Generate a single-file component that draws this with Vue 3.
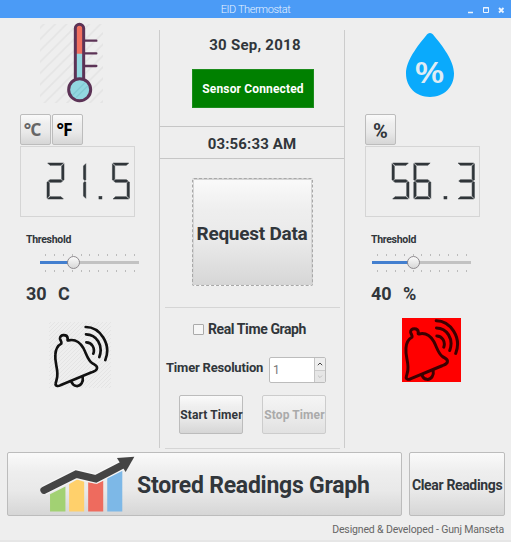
<script setup>
import { ref } from 'vue'

const SEGMENTS = {
  a: '2,0 49,0 42,7 9,7',
  b: '51,2 51,51 47,52 44,48 44,9',
  c: '51,57 51,106 44,99 44,60 47,56',
  d: '9,101 42,101 49,108 2,108',
  e: '0,57 4,56 7,60 7,99 0,106',
  f: '0,2 7,9 7,48 4,52 0,51',
  g: '4,54 9,50 42,50 47,54 42,58 9,58'
}
const DIGITS = {
  1: 'bc', 2: 'abged', 3: 'abgcd', 5: 'afgcd', 6: 'afgecd'
}

const checked = ref(false)
const panels = [
  {
    id: 'temperature', kind: 'thermometer', units: ['°C', '°F'], reading: '21.5',
    fill: 33, value: '30', unit: 'C'
  },
  {
    id: 'humidity', kind: 'drop', units: ['%'], reading: '56.3',
    fill: 41.5, value: '40', unit: '%'
  }
]
const segmentsOf = (ch) => (DIGITS[ch] || '').split('').map((s) => SEGMENTS[s])
</script>

<template>
  <div class="window">
    <header class="titlebar">
      <span class="title">EID Thermostat</span>
      <svg class="controls" viewBox="0 0 40 18">
        <path d="M1 11.500h5" stroke-width="1.500" />
        <path d="M16.500 6.500h5v5h-5z M16 7h6" stroke-width="1" />
        <path d="M32 7l4.500 4.500M36.500 7l-4.500 4.500" stroke-width="1.800" />
      </svg>
    </header>

    <main class="board">
      <section v-for="p in panels" :key="p.id" class="panel" :class="p.id">
        <div class="picture">
          <svg v-if="p.kind === 'thermometer'" class="thermo" viewBox="120 72 189 237">
            <defs>
              <pattern id="wide" width="34" height="34" patternUnits="userSpaceOnUse">
                <path d="M-4 38L38 -4M-21 21L21 -21M13 55L55 13" stroke="#e4e4e4" stroke-width="5" />
              </pattern>
            </defs>
            <rect x="120" y="72" width="189" height="237" fill="url(#wide)" />
            <path d="M255 122h34M255 160h34M255 198h34" stroke="#5c3356" stroke-width="7" stroke-linecap="round" />
            <rect x="226" y="73" width="25" height="182" rx="12.500" fill="#92d8e0" />
            <path d="M226 161V86a12.500 12.500 0 0 1 25 0v75z" fill="#f1705f" />
            <rect x="226" y="73" width="25" height="182" rx="12.500" fill="none" stroke="#5c3356" stroke-width="9" />
            <circle cx="239" cy="269" r="33" fill="#92d8e0" stroke="#5c3356" stroke-width="9" />
            <path d="M218 285l36-36M229 292l34-34" stroke="#83cbd3" stroke-width="4" />
          </svg>
          <div v-else class="drop">
            <svg viewBox="0 0 144 192">
              <path d="M72 0C67 0 64 3 60 8C35 38 0 83 0 121C0 164 31 192 72 192S144 164 144 121C144 83 109 38 84 8C80 3 77 0 72 0Z" fill="#0aaafc" />
            </svg>
            <span>%</span>
          </div>
        </div>

        <div class="units">
          <button v-for="(u, i) in p.units" :key="u" class="btn unit" :class="{ muted: p.units.length > 1 && i === 0, dark: i === 1 }">{{ u }}</button>
        </div>

        <div class="lcd" role="img" :aria-label="p.reading">
          <svg viewBox="0 0 248 108">
            <g v-for="(ch, i) in p.reading" :key="i" :transform="`translate(${i * 65.4} 0)`">
              <polygon v-for="pts in segmentsOf(ch)" :key="pts" :points="pts" />
              <rect v-if="ch === '.'" x="25" y="100" width="9" height="8" />
            </g>
          </svg>
        </div>

        <div class="threshold">Threshold</div>
        <div class="slider">
          <div class="ticks"><i v-for="n in 11" :key="n"></i></div>
          <div class="track">
            <div class="fill" :style="{ width: p.fill + '%' }"></div>
            <div class="knob"></div>
          </div>
          <div class="ticks"><i v-for="n in 11" :key="n"></i></div>
        </div>
        <div class="value"><span>{{ p.value }}</span><span>{{ p.unit }}</span></div>

        <svg class="bell" :viewBox="p.kind === 'drop' ? '155 58 176 193' : '147 51 186 198'">
          <defs>
            <pattern id="fine" width="12" height="12" patternUnits="userSpaceOnUse">
              <path d="M-3 15L15 -3M-9 9L9 -9M3 21L21 3" stroke="#e4e4e4" stroke-width="3" />
            </pattern>
          </defs>
          <rect v-if="p.kind !== 'drop'" x="147" y="51" width="186" height="198" fill="url(#fine)" />
          <g class="bell-lines">
            <path d="M184 116C186 110 181 106 180 101C179 87 202 87 203 100C203 105 201 107 206 106C224 102 240 112 250 129C260 148 263 165 276 174C284 180 293 181 291 190C290 198 281 199 275 202L181 241C173 245 165 243 167 235C169 226 173 219 172 205C172 186 164 171 166 149C167 132 173 122 184 116Z" />
            <path d="M214 230C221 246 237 247 245 235C249 229 249 222 248 217" />
            <path d="M257 66C300 66 335 117 316 165M258 88C289 88 311 121 298 156M259 112C275 112 286 129 280 146" />
          </g>
        </svg>
      </section>

      <section class="middle">
        <div class="date">30 Sep, 2018</div>
        <div class="sensor">Sensor Connected</div>
        <div class="clock">03:56:33 AM</div>
        <button class="btn request"><span>Request Data</span></button>
        <div class="timer">
          <label class="realtime"><input v-model="checked" type="checkbox" />Real Time Graph</label>
          <div class="resolution">
            <span>Timer Resolution</span>
            <div class="spin">
              <span class="num">1</span>
              <div class="arrows">
                <svg viewBox="0 0 10 12"><path d="M2.800 7.200L5 5l2.200 2.200" stroke="#444" /></svg>
                <svg class="down" viewBox="0 0 10 12"><path d="M2.800 5L5 7.200L7.200 5" stroke="#bbb" /></svg>
              </div>
            </div>
          </div>
          <div class="actions">
            <button class="btn">Start Timer</button>
            <button class="btn" disabled>Stop Timer</button>
          </div>
        </div>
      </section>
    </main>

    <div class="bottom">
      <button class="btn stored">
        <svg viewBox="120 46 284 170">
          <path d="M150 160l46-23v75h-46z" fill="#a2d173" />
          <path d="M207 130l24-14 21 7v89h-45z" fill="#ffd06b" />
          <path d="M264 124l26 5 19-9v92h-45z" fill="#ee6b5e" />
          <path d="M321 112l45-22v122h-45z" fill="#7db8e7" />
          <path d="M132 148L228 100L287 114L374 69" fill="none" stroke="#fff" stroke-width="30" stroke-linejoin="round" opacity=".5" />
          <path d="M132 148L228 100L287 114L374 69" fill="none" stroke="#444" stroke-width="22" stroke-linecap="round" />
          <path d="M350 52L402 48L376 94Z" fill="#444" />
        </svg>
        <span>Stored Readings Graph</span>
      </button>
      <button class="btn clear">Clear Readings</button>
    </div>
    <footer>Designed &amp; Developed - Gunj Manseta</footer>
  </div>
</template>

<style>
body { background: #eee; overflow: hidden; }
</style>

<style scoped>
* { box-sizing: border-box; }
.window { width: 511px; height: 542px; background: #eee; font-family: Roboto, "Liberation Sans", sans-serif; color: #31363b; font-weight: 700; border-bottom: 2px solid #e6e6e6; white-space: nowrap; overflow: hidden; }
.titlebar { height: 18px; background: #4b9bf6; display: grid; grid-template-columns: 1fr auto 1fr; align-items: center; color: #e6f2ff; }
.title { grid-column: 2; font-size: 11px; font-weight: 300; line-height: 19px; letter-spacing: -0.4px; }
.controls { justify-self: end; width: 40px; height: 18px; margin-right: 4px; fill: none; stroke: #eaf4ff; }
.board { display: grid; grid-template-columns: 160px 184px 167px; height: 434px; }
.panel { grid-row: 1; padding: 6px 0 0 20px; }
.temperature { grid-column: 1; }
.humidity { grid-column: 3; padding-left: 21px; }
.picture { height: 90px; }
.thermo { display: block; width: 63px; height: 79px; margin-left: 20px; overflow: visible; }
.drop { display: grid; width: 48px; height: 73px; padding-top: 9px; margin-left: 41px; }
.drop svg { grid-area: 1 / 1; width: 48px; height: 64px; }
.drop span { grid-area: 1 / 1; place-self: center; padding-top: 13px; color: #dfecf5; font: 600 29px/1 "Open Sans", sans-serif; transform: scaleX(1.2); }
.btn { font-family: inherit; font-weight: 700; color: #31363b; border: 1px solid #bcbcbc; border-radius: 2px; background: linear-gradient(#fafafa, #eee 30%, #e9e9e9 60%, #d6d6d6); padding: 0; display: flex; align-items: center; justify-content: center; white-space: nowrap; }
.units { display: flex; gap: 1px; height: 32px; }
.unit { width: 31px; height: 31px; font: 700 17.500px/1 "Open Sans", sans-serif; padding: 0 7px 0 0; letter-spacing: -1px; }
.unit.muted { color: #666; }
.unit.dark { color: #000; }
.humidity .unit { font: 700 20px/1 Roboto, sans-serif; padding: 3px 0 0; letter-spacing: 0; }
.lcd { width: 115px; height: 71px; border: 1px solid #d5d5d5; padding: 16px 0 0 26px; }
.lcd svg { display: block; width: 82.700px; height: 36px; overflow: visible; fill: #30363a; stroke: #30363a; stroke-width: 1.500; }
.threshold { font-size: 10.500px; line-height: 15px; margin: 15px 0 -1px 6px; letter-spacing: -0.3px; }
.slider { width: 99px; margin: 8px 0 0 20px; }
.humidity .slider { margin-left: 7px; }
.ticks { display: flex; justify-content: space-between; padding: 0 4px 0 5px; height: 2px; }
.ticks i { width: 1px; background: #bbb; }
.track { height: 3px; margin: 5px 0 6px; background: #c2c2c2; display: flex; align-items: center; }
.fill { height: 3px; background: #437fcf; }
.knob { flex: none; width: 13px; height: 13px; margin-left: -6px; border: 1px solid #8f8b8f; border-radius: 50%; background: linear-gradient(#fafafa, #d8d8d8); }
.value { display: flex; margin: 11px 0 0 6px; font-size: 18px; line-height: 22px; }
.value span:first-child { width: 32px; }
.bell { display: block; width: 62px; height: 66px; margin: 17px 0 0 29px; }
.humidity .bell { width: 59px; height: 64px; margin: 13px 0 0 37px; background: #f00; }
.bell-lines { fill: none; stroke: #111; stroke-width: 8; stroke-linecap: round; stroke-linejoin: round; }
.humidity .bell-lines { stroke: #3c0000; stroke-width: 9; }
.middle { grid-column: 2; grid-row: 1; height: 418px; margin: 12px 0 0 -1px; width: 186px; border: solid #ccc; border-width: 0 1px; display: flex; flex-direction: column; align-items: center; }
.middle > * { flex: none; }
.date { font-size: 15px; line-height: 18px; margin-top: 6px; padding-left: 6px; letter-spacing: 0.25px; }
.sensor { width: 122px; height: 39px; margin: 15px 0 0 2px; background: #008000; border: 1px solid #1c8c1c; color: #fff; font-size: 12px; line-height: 39px; text-align: center; letter-spacing: 0.15px; }
.clock { width: 184px; margin-top: 18px; height: 33px; border: solid #c6c6c6; border-width: 1px 0; font-size: 15px; line-height: 34px; text-align: center; letter-spacing: 0.15px; }
.request { width: 121px; height: 108px; margin-top: 19px; font-size: 19px; letter-spacing: -0.25px; border: 1px dashed #a8a8a8; outline: 1px solid #d4d4d4; outline-offset: -2px; padding-top: 2px; }
.timer { width: 175px; height: 142px; margin: 21px 0 0 1px; border: solid #d5d5d5; border-width: 1px 0; }
.realtime { display: flex; align-items: center; height: 18px; margin: 12px 0 0 28px; font-size: 14px; letter-spacing: -0.4px; }
.realtime input { appearance: none; width: 11px; height: 11px; margin: 0 4px 0 0; border: 1px solid #aaa; border-radius: 1px; background: #f6f6f6; }
.resolution { display: flex; align-items: center; justify-content: space-between; margin-top: 19px; padding: 0 14px 0 1px; height: 26px; font-size: 13px; letter-spacing: -0.2px; }
.resolution > span { padding-bottom: 5px; }
.spin { display: flex; width: 57px; height: 26px; border: 1px solid #bcbcbc; border-radius: 2px; background: #fff; overflow: hidden; }
.num { flex: 1; font-size: 12px; font-weight: 400; line-height: 25px; padding-left: 3px; color: #777; }
.arrows { width: 11px; border-left: 1px solid #c5c5c5; background: #eee; display: flex; flex-direction: column; }
.arrows svg { width: 10px; height: 12px; fill: none; }
.arrows .down { border-top: 1px solid #ccc; background: #e6e6e6; }
.actions { display: flex; justify-content: space-between; margin-top: 12px; padding: 0 14px; }
.actions .btn { width: 64px; height: 39px; font-size: 12px; letter-spacing: 0.1px; padding-left: 1px; }
.actions .btn:disabled { color: #aaa; border-color: #ccc; background: linear-gradient(#f5f5f5, #ececec 50%, #e1e1e1); }
.bottom { display: flex; gap: 7px; padding: 0 6px 0 7px; }
.stored { width: 396px; height: 64px; font-size: 23px; letter-spacing: -0.25px; justify-content: flex-start; padding: 3px 0 0 32px; }
.stored svg { width: 95px; height: 57px; margin: -3px 2px 0 0; }
.clear { width: 96px; height: 64px; font-size: 14px; letter-spacing: -0.35px; padding-top: 2px; }
footer { text-align: right; padding-right: 7px; margin-top: 6px; font-size: 10.500px; font-weight: 400; line-height: 15px; color: #666; letter-spacing: -0.15px; }
</style>
